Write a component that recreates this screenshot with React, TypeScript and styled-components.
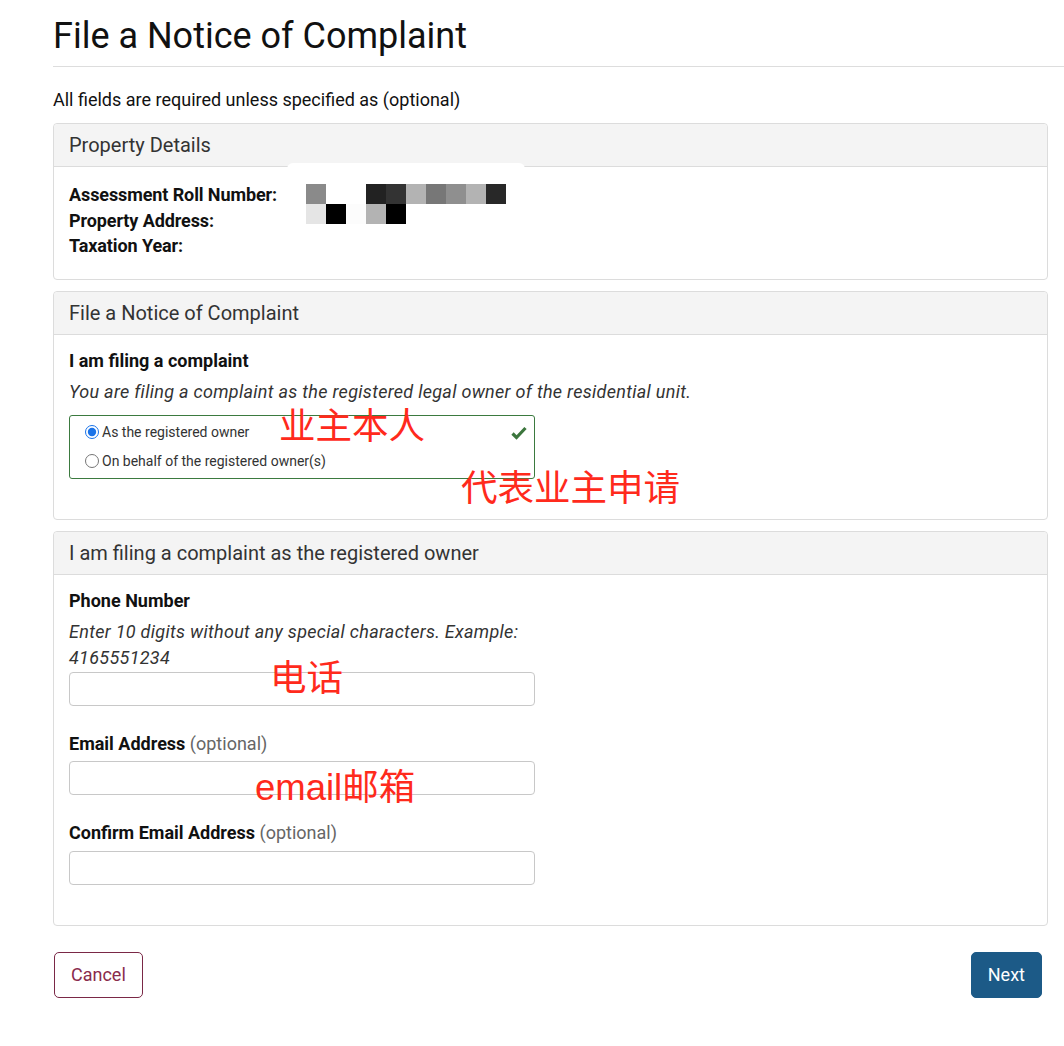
import React from "react";
import styled, { createGlobalStyle } from "styled-components";

const Global = createGlobalStyle`
  html, body { margin: 0; padding: 0; background: #fff; }
  body { font-family: Roboto, "Noto Sans", Arial, sans-serif; color: #111; }
  * { box-sizing: border-box; }
`;

const Page = styled.div`
  padding: 0 0 40px 53px;
  width: 1064px;
  position: relative;
`;

const Title = styled.h1`
  margin: 0;
  padding-top: 14px;
  font-size: 36px;
  font-weight: 400;
  line-height: 44px;
  color: #111;
`;

const Rule = styled.hr`
  margin: 8px 0 0 0;
  border: 0;
  border-top: 1px solid #ddd;
`;

const Intro = styled.p`
  margin: 0;
  padding: 21px 0 11px;
  font-size: 18px;
  line-height: 24px;
`;

const Stack = styled.div`
  width: 995px;
  display: flex;
  flex-direction: column;
  gap: 11px;
`;

const Card = styled.section`
  position: relative;
  border: 1px solid #dcdcdc;
  border-radius: 4px;
  background: #fff;
`;

const CardHeader = styled.div`
  background: #f4f4f4;
  border-bottom: 1px solid #dcdcdc;
  border-radius: 4px 4px 0 0;
  padding: 10px 15px;
  font-size: 20px;
  line-height: 22px;
  color: #333;
`;

const CardBody = styled.div<{ $top?: number; $bottom: number }>`
  padding: ${(p) => p.$top ?? 14}px 15px ${(p) => p.$bottom}px;
`;

const DetailGrid = styled.div`
  display: grid;
  grid-template-columns: 237px 1fr;
  font-size: 18px;
  line-height: 25.5px;
`;

const DetailLabels = styled.div`
  display: flex;
  flex-direction: column;
  font-weight: 700;
  letter-spacing: -0.1px;
`;

const Field = styled.div<{ $gap?: number }>`
  width: 466px;
  margin-top: ${(p) => p.$gap ?? 0}px;
`;

const Label = styled.div`
  font-size: 18px;
  font-weight: 700;
  line-height: 24px;
`;

const Optional = styled.span`
  font-weight: 400;
  color: #666;
`;

const Hint = styled.div`
  margin-top: 6px;
  font-size: 18px;
  letter-spacing: 0.3px;
  font-style: italic;
  color: #333;
  line-height: 26px;
`;

const WideHint = styled(Hint)`
  width: 700px;
`;

const Input = styled.input<{ $gap?: number }>`
  display: block;
  width: 466px;
  height: 34px;
  border: 1px solid #c8c8c8;
  border-radius: 4px;
  margin-top: ${(p) => p.$gap ?? 5}px;
  font-size: 16px;
  padding: 0 10px;
  background: #fff;
`;

const RadioBox = styled.div`
  position: relative;
  width: 466px;
  margin-top: 10px;
  border: 1px solid #3b7a3f;
  border-radius: 3px;
  padding: 2px 15px;
  display: flex;
  flex-direction: column;
`;

const RadioRow = styled.label`
  display: flex;
  align-items: center;
  height: 29px;
  font-size: 14px;
  color: #333;
`;

const Radio = styled.input`
  margin: 0 3px 0 0;
  width: 14px;
  height: 14px;
  accent-color: #1a73e8;
`;

const Check = styled.svg`
  position: absolute;
  right: 7px;
  top: 10px;
`;

const Redact = styled.div`
  position: absolute;
  left: 233px;
  top: 39px;
  width: 238px;
  height: 22px;
  background: #fff;
  border-radius: 6px;
`;

const MosaicWrap = styled.div`
  position: relative;
  padding-top: 2px;
`;

const Note = styled.div<{ $x: number; $y: number }>`
  position: absolute;
  left: ${(p) => p.$x}px;
  top: ${(p) => p.$y}px;
  font-family: "Liberation Sans", "Noto Sans CJK SC", sans-serif;
  font-size: 36.5px;
  line-height: 40px;
  color: #ff2a1c;
  white-space: nowrap;
  pointer-events: none;
`;

const Actions = styled.div`
  width: 989px;
  margin-top: 26px;
  padding-left: 1px;
  display: flex;
  justify-content: space-between;
`;

const Button = styled.button<{ $primary?: boolean }>`
  height: 46px;
  padding: 0 16px;
  border-radius: 5px;
  font-family: Roboto, sans-serif;
  font-size: 18px;
  border: 1px solid ${(p) => (p.$primary ? "#1c5a87" : "#7a2846")};
  background: ${(p) => (p.$primary ? "#1c5a87" : "#fff")};
  color: ${(p) => (p.$primary ? "#fff" : "#8a2b4c")};
`;

const cells: [number, number, string][] = [
  [0, 0, "#8a8a8a"],
  [3, 0, "#222"],
  [4, 0, "#333"],
  [5, 0, "#b3b3b3"],
  [6, 0, "#777"],
  [7, 0, "#8f8f8f"],
  [8, 0, "#b3b3b3"],
  [9, 0, "#282828"],
  [0, 1, "#e5e5e5"],
  [1, 1, "#000"],
  [2, 1, "#fcfcfc"],
  [3, 1, "#b3b3b3"],
  [4, 1, "#000"],
];

const Mosaic = () => (
  <svg width="200" height="40" viewBox="0 0 200 40">
    {cells.map(([x, y, c]) => (
      <rect key={`${x}-${y}`} x={x * 20} y={y * 20} width="20" height="20" fill={c} />
    ))}
  </svg>
);

export default function App() {
  return (
    <>
      <Global />
      <Page>
        <Title>File a Notice of Complaint</Title>
        <Rule />
        <Intro>All fields are required unless specified as (optional)</Intro>
        <Stack>
          <Card>
            <CardHeader>Property Details</CardHeader>
            <Redact />
            <CardBody $top={15} $bottom={20}>
              <DetailGrid>
                <DetailLabels>
                  <span>Assessment Roll Number:</span>
                  <span>Property Address:</span>
                  <span>Taxation Year:</span>
                </DetailLabels>
                <MosaicWrap>
                  <Mosaic />
                </MosaicWrap>
              </DetailGrid>
            </CardBody>
          </Card>

          <Card>
            <CardHeader>File a Notice of Complaint</CardHeader>
            <CardBody $bottom={40}>
              <Label>I am filing a complaint</Label>
              <WideHint>You are filing a complaint as the registered legal owner of the residential unit.</WideHint>
              <RadioBox>
                <RadioRow>
                  <Radio type="radio" name="role" defaultChecked />
                  As the registered owner
                </RadioRow>
                <RadioRow>
                  <Radio type="radio" name="role" />
                  On behalf of the registered owner(s)
                </RadioRow>
                <Check width="16" height="14" viewBox="0 0 16 14">
                  <path d="M1.5 7.5 L5.5 11.5 L14.5 2" stroke="#3c763d" strokeWidth="3.2" fill="none" />
                </Check>
              </RadioBox>
            </CardBody>
            <Note $x={225} $y={115}>业主本人</Note>
            <Note $x={407} $y={177}>代表业主申请</Note>
          </Card>

          <Card>
            <CardHeader>I am filing a complaint as the registered owner</CardHeader>
            <CardBody $bottom={40}>
              <Field>
                <Label>Phone Number</Label>
                <Hint>Enter 10 digits without any special characters. Example: 4165551234</Hint>
                <Input type="text" $gap={1} />
              </Field>
              <Field $gap={26}>
                <Label>
                  Email Address <Optional>(optional)</Optional>
                </Label>
                <Input type="text" />
              </Field>
              <Field $gap={26}>
                <Label>
                  Confirm Email Address <Optional>(optional)</Optional>
                </Label>
                <Input type="text" $gap={6} />
              </Field>
            </CardBody>
            <Note $x={216} $y={127}>电话</Note>
            <Note $x={201} $y={236}>email邮箱</Note>
          </Card>
        </Stack>
        <Actions>
          <Button>Cancel</Button>
          <Button $primary>Next</Button>
        </Actions>
      </Page>
    </>
  );
}
